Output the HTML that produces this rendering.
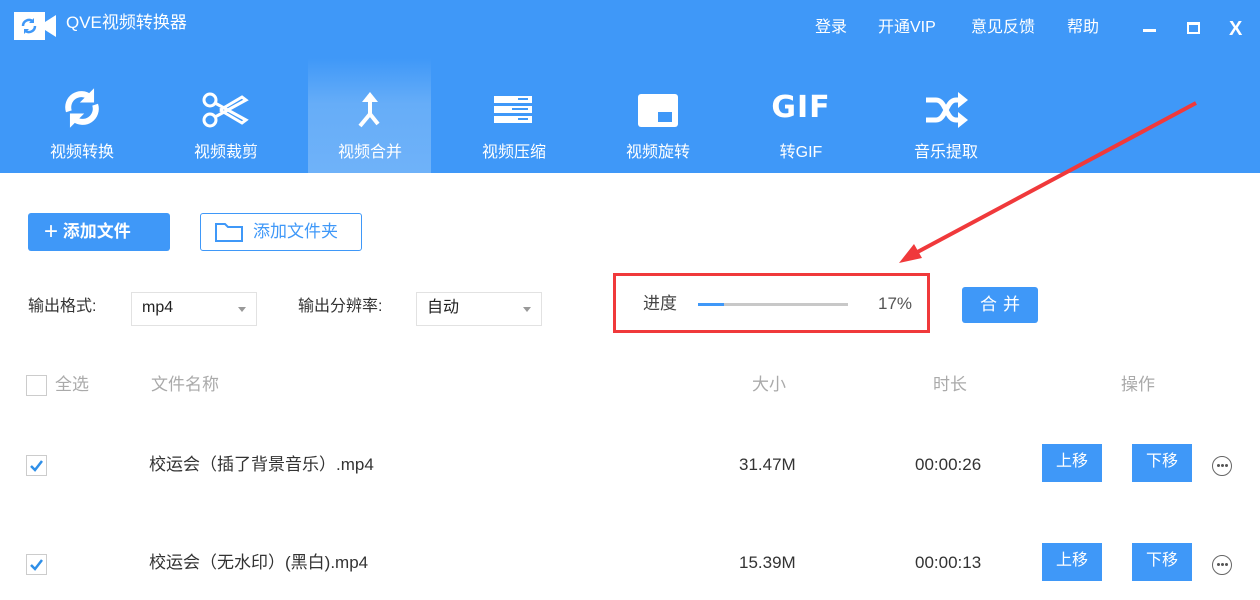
<!DOCTYPE html>
<html><head><meta charset="utf-8"><style>
*{margin:0;padding:0;box-sizing:border-box}
body{width:1260px;height:600px;background:#fff;position:relative;overflow:hidden;font-family:"Liberation Sans","Noto Sans CJK SC",sans-serif;color:#333}
.a{position:absolute;white-space:nowrap;line-height:1.2}
#hd{position:absolute;left:0;top:0;width:1260px;height:173px;background:#3f98f8}
.nav{position:absolute;top:80px;width:124px;height:93px;text-align:center;color:#fff;font-size:16px}
.nav svg{position:absolute;left:42px;top:10px}
.nav span{position:absolute;left:0;right:0;top:63px;line-height:1.2}
.top{color:#fff;font-size:16px;top:18px}
.sel{position:absolute;height:34px;border:1px solid #e2e2e2;background:#fff;font-size:16px;padding:5px 10px;color:#222;line-height:1.2}
.sel:after{content:"";position:absolute;right:10px;top:14px;border:4px solid transparent;border-top:5px solid #999}
.bb{position:absolute;background:#3f98f8;color:#fff;font-size:16px;text-align:center;line-height:36px;width:60px;height:38px}
.cb{position:absolute;left:26px;width:21px;height:21px;border:1px solid #ccc;background:#fff}
.dots{position:absolute;left:1212px;width:20px;height:20px;border:1.5px solid #666;border-radius:50%}
.dots i{position:absolute;top:7px;width:3px;height:3px;background:#555;border-radius:50%}
</style></head><body>
<div id="hd">
 <div class="a" style="left:308px;top:58px;width:123px;height:115px;background:linear-gradient(#3f98f8,#66adf8 40%,#6fb2f9)"></div>
 <svg class="a" style="left:14px;top:12px" width="42" height="28" viewBox="0 0 42 28"><rect x="0" y="0" width="31" height="28" fill="#fff"/><path d="M31 10 L42 3 V25 L31 18Z" fill="#fff"/><path d="M9 14a6 6 0 0 1 10-4.5M21 14a6 6 0 0 1-10 4.5" stroke="#3f98f8" stroke-width="2.5" fill="none"/><path d="M20 6v5h-5z M10 22v-5h5z" fill="#3f98f8"/></svg>
 <div class="a" style="left:66px;top:13px;color:#fff;font-size:17px">QVE视频转换器</div>
 <div class="a top" style="left:815px">登录</div>
 <div class="a top" style="left:878px">开通VIP</div>
 <div class="a top" style="left:971px">意见反馈</div>
 <div class="a top" style="left:1067px">帮助</div>
 <div class="a" style="left:1143px;top:29px;width:13px;height:3px;background:#fff"></div>
 <div class="a" style="left:1187px;top:22px;width:13px;height:12px;border:2px solid #fff;border-top-width:3px"></div>
 <div class="a" style="left:1229px;top:17px;color:#fff;font-size:20px;font-weight:bold">X</div>

 <div class="nav" style="left:20px"><svg width="44" height="46" viewBox="0 0 40 42" style="left:40px;top:5px"><path d="M8 24a12 12 0 0 1 19-13M32 18a12 12 0 0 1-19 13" stroke="#fff" stroke-width="5.5" fill="none"/><path d="M31 3v13H18z M9 39V26h13z" fill="#fff"/></svg><span>视频转换</span></div>
 <div class="nav" style="left:164px"><svg width="48" height="40" viewBox="0 0 48 40" style="left:38px"><circle cx="8" cy="10" r="6" stroke="#fff" stroke-width="3" fill="none"/><circle cx="8" cy="30" r="6" stroke="#fff" stroke-width="3" fill="none"/><path d="M13 13 L44 30 L40 33 L18 20 M13 27 L44 10 L40 7 L18 20" stroke="#fff" stroke-width="3" fill="none"/></svg><span>视频裁剪</span></div>
 <div class="nav" style="left:308px"><svg width="40" height="40" viewBox="0 0 40 40"><path d="M20 6 L20 24 L10 36 M20 24 L28 34" stroke="#fff" stroke-width="4" fill="none"/><path d="M12 12 L20 2 L28 12Z" fill="#fff"/></svg><span>视频合并</span></div>
 <div class="nav" style="left:452px"><svg width="40" height="40" viewBox="0 0 40 40"><rect x="0" y="6" width="38" height="7" fill="#fff"/><rect x="0" y="16" width="38" height="7" fill="#fff"/><rect x="0" y="26" width="38" height="7" fill="#fff"/><rect x="24" y="8" width="10" height="2" fill="#3f98f8"/><rect x="18" y="18" width="16" height="2" fill="#3f98f8"/><rect x="24" y="28" width="10" height="2" fill="#3f98f8"/></svg><span>视频压缩</span></div>
 <div class="nav" style="left:596px"><svg width="44" height="40" viewBox="0 0 44 40"><rect x="0" y="4" width="40" height="33" rx="3" fill="#fff"/><rect x="20" y="22" width="14" height="10" fill="#3f98f8"/></svg><span>视频旋转</span></div>
 <div class="nav" style="left:739px"><div class="a" style="left:0;right:0;top:10px;font-size:30px;font-weight:bold;font-family:'DejaVu Sans',sans-serif;letter-spacing:1px">GIF</div><span>转GIF</span></div>
 <div class="nav" style="left:884px"><svg width="44" height="40" viewBox="0 0 44 40"><path d="M0 10 H10 C20 10 20 30 30 30 H36 M0 30 H10 C20 30 20 10 30 10 H36" stroke="#fff" stroke-width="5" fill="none"/><path d="M32 2 L42 10 L32 18Z M32 22 L42 30 L32 38Z" fill="#fff"/></svg><span>音乐提取</span></div>
</div>

<div class="a" style="left:28px;top:213px;width:142px;height:38px;background:#3f98f8;border-radius:3px;color:#fff;font-size:17px;font-weight:bold;line-height:38px;padding-left:16px"><span style="font-size:24px;font-weight:normal;vertical-align:-2px">+</span> 添加文件</div>
<div class="a" style="left:200px;top:213px;width:162px;height:38px;border:1.5px solid #3f98f8;border-radius:3px;color:#3f98f8;font-size:17px;line-height:35px;padding-left:52px">添加文件夹</div>
<svg class="a" style="left:214px;top:221px" width="30" height="22" viewBox="0 0 30 22"><path d="M2 3h9l3 3h14v14H2z" stroke="#3f98f8" stroke-width="2" fill="none"/></svg>

<div class="a" style="left:28px;top:297px;font-size:16px;color:#333">输出格式:</div>
<div class="sel" style="left:131px;top:292px;width:126px">mp4</div>
<div class="a" style="left:298px;top:297px;font-size:16px;color:#333">输出分辨率:</div>
<div class="sel" style="left:416px;top:292px;width:126px">自动</div>

<div class="a" style="left:613px;top:273px;width:317px;height:60px;border:3px solid #f0393b"></div>
<div class="a" style="left:643px;top:294px;font-size:17px;color:#444">进度</div>
<div class="a" style="left:698px;top:303px;width:150px;height:3px;background:#c8c8c8"></div>
<div class="a" style="left:698px;top:303px;width:26px;height:3px;background:#3f98f8"></div>
<div class="a" style="left:878px;top:294px;font-size:17px;color:#555">17%</div>
<div class="a" style="left:962px;top:287px;width:76px;height:36px;background:#3f98f8;border-radius:3px;color:#fff;font-size:17px;text-align:center;line-height:36px;letter-spacing:6px;padding-left:6px">合并</div>

<svg class="a" style="left:0;top:0" width="1260" height="600"><path d="M1196 103 L910 256" stroke="#f0393b" stroke-width="4"/><path d="M899 263 L914 244 L922 258Z" fill="#f0393b"/></svg>

<div class="cb" style="top:375px"></div>
<div class="a" style="left:55px;top:375px;font-size:17px;color:#aaa">全选</div>
<div class="a" style="left:151px;top:375px;font-size:17px;color:#aaa">文件名称</div>
<div class="a" style="left:752px;top:375px;font-size:17px;color:#aaa">大小</div>
<div class="a" style="left:933px;top:375px;font-size:17px;color:#aaa">时长</div>
<div class="a" style="left:1121px;top:375px;font-size:17px;color:#aaa">操作</div>

<div class="cb" style="top:455px"><svg width="19" height="19" viewBox="0 0 19 19"><path d="M4 10l4 4 7-9" stroke="#2f8fe8" stroke-width="2.5" fill="none"/></svg></div>
<div class="a" style="left:149px;top:455px;font-size:17px;color:#333">校运会（插了背景音乐）.mp4</div>
<div class="a" style="left:739px;top:455px;font-size:17px">31.47M</div>
<div class="a" style="left:915px;top:455px;font-size:17px">00:00:26</div>
<div class="bb" style="left:1042px;top:444px">上移</div>
<div class="bb" style="left:1132px;top:444px">下移</div>
<div class="dots" style="top:456px"><i style="left:3.5px"></i><i style="left:7.5px"></i><i style="left:11.5px"></i></div>

<div class="cb" style="top:554px"><svg width="19" height="19" viewBox="0 0 19 19"><path d="M4 10l4 4 7-9" stroke="#2f8fe8" stroke-width="2.5" fill="none"/></svg></div>
<div class="a" style="left:149px;top:553px;font-size:17px;color:#333">校运会（无水印）(黑白).mp4</div>
<div class="a" style="left:739px;top:553px;font-size:17px">15.39M</div>
<div class="a" style="left:915px;top:553px;font-size:17px">00:00:13</div>
<div class="bb" style="left:1042px;top:543px">上移</div>
<div class="bb" style="left:1132px;top:543px">下移</div>
<div class="dots" style="top:555px"><i style="left:3.5px"></i><i style="left:7.5px"></i><i style="left:11.5px"></i></div>
</body></html>
